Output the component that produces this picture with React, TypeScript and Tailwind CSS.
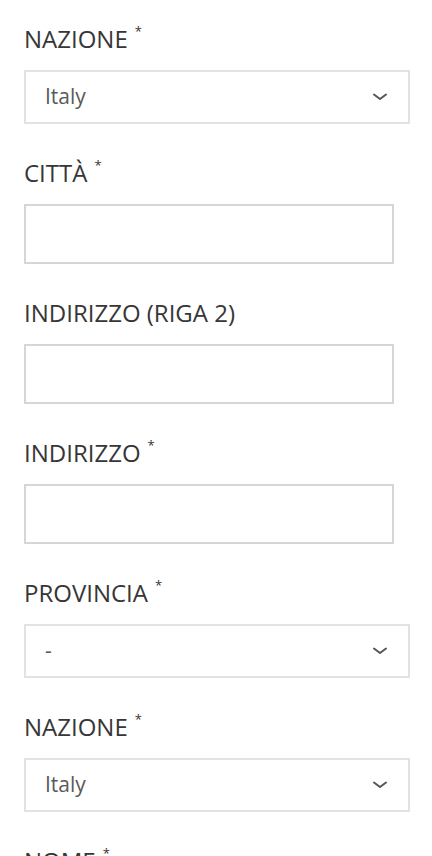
import React from "react";

function Label({ text, required }: { text: string; required?: boolean }) {
  return (
    <div className="h-[30px] text-[24px] leading-[30px] text-[#363636] whitespace-nowrap">
      {text}
      {required && (
        <span className="relative top-[-12px] ml-[7px] text-[13px] leading-none text-[#333333]">*</span>
      )}
    </div>
  );
}

function Chevron() {
  return (
    <svg width="16" height="10" viewBox="0 0 16 10" className="absolute right-[20px] top-1/2 -translate-y-1/2">
      <path d="M2 2.5 L8 7 L14 2.5" fill="none" stroke="#555555" strokeWidth="2" strokeLinecap="round" strokeLinejoin="round" />
    </svg>
  );
}

function SelectBox({ value }: { value: string }) {
  return (
    <div className="relative w-[386px] h-[54px] border-2 border-[#e2e2e2] bg-white flex items-center pl-[19px] text-[21px] text-[#5a5a5a]">
      {value}
      <Chevron />
    </div>
  );
}

function InputBox() {
  return <div className="w-[370px] h-[60px] border-2 border-[#d6d6d6] bg-white" />;
}

export default function App() {
  const groups: { label: string; required: boolean; kind: "select" | "input"; value?: string }[] = [
    { label: "NAZIONE", required: true, kind: "select", value: "Italy" },
    { label: "CITTÀ", required: true, kind: "input" },
    { label: "INDIRIZZO (RIGA 2)", required: false, kind: "input" },
    { label: "INDIRIZZO", required: true, kind: "input" },
    { label: "PROVINCIA", required: true, kind: "select", value: "-" },
    { label: "NAZIONE", required: true, kind: "select", value: "Italy" },
    { label: "NOME", required: true, kind: "input" },
  ];
  return (
    <div
      className="w-[432px] h-[856px] overflow-hidden bg-white pl-[24px] pt-[24px]"
      style={{ fontFamily: '"Open Sans", "Noto Sans", sans-serif' }}
    >
      {groups.map((g, i) => (
        <div key={i} className="mb-[34px]">
          <Label text={g.label} required={g.required} />
          <div className="mt-[16px]">
            {g.kind === "select" ? <SelectBox value={g.value || ""} /> : <InputBox />}
          </div>
        </div>
      ))}
    </div>
  );
}
